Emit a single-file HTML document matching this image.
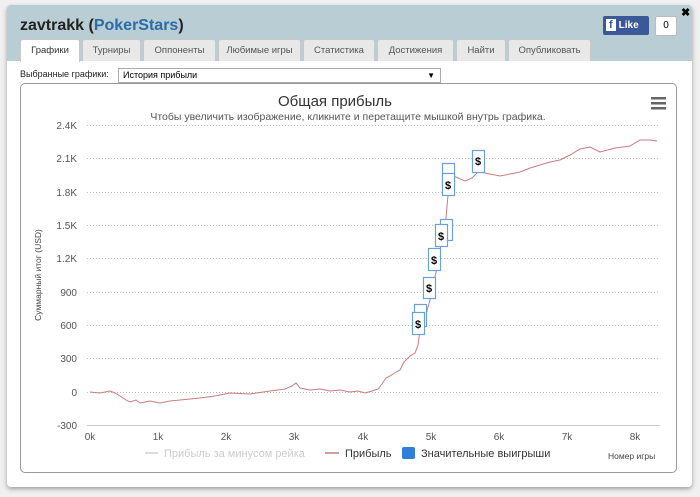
<!DOCTYPE html><html><head><meta charset="utf-8"><style>
body{margin:0;width:700px;height:497px;background:#f0f0f0;font-family:"Liberation Sans",sans-serif;overflow:hidden;position:relative}
.win{position:absolute;left:7px;top:5px;width:685px;height:482px;background:#fff;border-radius:4px;box-shadow:0 2px 5px rgba(0,0,0,.35);overflow:hidden}
.hd{position:absolute;left:0;top:0;width:685px;height:56px;background:#b9cdd5}
.ttl{position:absolute;left:13px;top:12px;font-size:16px;font-weight:bold;color:#222}
.ttl span{color:#2a6ba8}
.tab{position:absolute;top:34px;height:21px;background:#e8e8e8;border:1px solid #c8c8c8;border-bottom:none;border-radius:3px 3px 0 0;font-size:9.5px;color:#555;text-align:center;line-height:21px}
.tab.a{background:#fff;color:#333;height:22px}
.fb{position:absolute;left:596px;top:11px;width:46px;height:19px;background:#3b5998;border-radius:2px;color:#fff;font-size:10px;font-weight:bold;line-height:19px}
.cnt{position:absolute;left:648px;top:11px;width:20px;height:18px;border:1px solid #bbb;background:#fff;font-size:10px;text-align:center;line-height:18px;border-radius:2px}
.sel{position:absolute;left:111px;top:63px;width:317px;height:13px;border:1px solid #aaa;font-size:9px;line-height:13px;padding-left:4px}
.box{position:absolute;left:13px;top:78px;width:655px;height:388px;border:1px solid #999;border-radius:5px}
</style></head><body>
<div class="win">
<div class="hd"></div>
<div class="ttl">zavtrakk (<span>PokerStars</span>)</div>
<div class="fb"><span style="background:#fff;color:#3b5998;padding:0 3px;margin:0 3px 0 3px;font-size:11px">f</span>Like</div>
<div class="cnt">0</div>
<div style="position:absolute;left:674px;top:1px;font-size:11px;font-weight:bold">✖</div>
<div class="tab a" style="left:13px;width:58px">Графики</div>
<div class="tab" style="left:75px;width:57px">Турниры</div>
<div class="tab" style="left:136px;width:71px">Оппоненты</div>
<div class="tab" style="left:211px;width:81px">Любимые игры</div>
<div class="tab" style="left:296px;width:70px">Статистика</div>
<div class="tab" style="left:370px;width:75px">Достижения</div>
<div class="tab" style="left:449px;width:48px">Найти</div>
<div class="tab" style="left:501px;width:81px">Опубликовать</div>
<div style="position:absolute;left:13px;top:64px;font-size:9px;color:#222">Выбранные графики:</div>
<div class="sel">История прибыли<span style="position:absolute;right:5px;font-size:8px">▼</span></div>
<div class="box"></div>
</div>
<svg width="700" height="497" style="position:absolute;left:0;top:0" font-family="Liberation Sans,sans-serif">
<text x="335" y="106" font-size="15" fill="#333" text-anchor="middle">Общая прибыль</text>
<text x="348" y="120" font-size="10.5" fill="#555" text-anchor="middle">Чтобы увеличить изображение, кликните и перетащите мышкой внутрь графика.</text>
<g fill="#666"><rect x="651" y="97" width="15" height="2.5"/><rect x="651" y="102" width="15" height="2.5"/><rect x="651" y="107" width="15" height="2.5"/></g>
<g stroke="#bbb" stroke-dasharray="1,2" stroke-width="1">
<line x1="87" x2="660" y1="125.5" y2="125.5"/><line x1="87" x2="660" y1="158.5" y2="158.5"/><line x1="87" x2="660" y1="192.5" y2="192.5"/><line x1="87" x2="660" y1="225.5" y2="225.5"/><line x1="87" x2="660" y1="258.5" y2="258.5"/><line x1="87" x2="660" y1="292.5" y2="292.5"/><line x1="87" x2="660" y1="325.5" y2="325.5"/><line x1="87" x2="660" y1="358.5" y2="358.5"/><line x1="87" x2="660" y1="392.5" y2="392.5"/></g>
<line x1="87" x2="660" y1="425.5" y2="425.5" stroke="#ccc"/>
<g font-size="10" fill="#555" text-anchor="end">
<text x="77" y="129">2.4K</text><text x="77" y="162">2.1K</text><text x="77" y="196">1.8K</text><text x="77" y="229">1.5K</text><text x="77" y="262">1.2K</text><text x="77" y="296">900</text><text x="77" y="329">600</text><text x="77" y="362">300</text><text x="77" y="396">0</text><text x="77" y="429">-300</text></g>
<g font-size="10" fill="#555" text-anchor="middle">
<text x="90" y="440">0k</text><text x="158" y="440">1k</text><text x="226" y="440">2k</text><text x="294" y="440">3k</text><text x="363" y="440">4k</text><text x="431" y="440">5k</text><text x="499" y="440">6k</text><text x="567" y="440">7k</text><text x="635" y="440">8k</text></g>
<text transform="translate(41,275) rotate(-90)" font-size="8.5" fill="#444" text-anchor="middle">Суммарный итог (USD)</text>
<polyline fill="none" stroke="#c87c7c" stroke-width="1" points="90,392 100,393 110,391 115,393 120,396 126,400 130,402 136,400 140,403 150,401 160,403 170,401 180,400 190,399 200,398 215,396 230,393 250,394 270,391 285,389 292,386 296,383 300,388 310,390 320,389 330,391 340,390 350,392 358,391 365,393 372,391 378,389 382,384 386,378 390,376 396,372 400,370 404,362 410,356 415,353 418,345 420,330 425,318 430,300 433,285 437,268 440,250 443,235 446,218 448,195 449,180 452,175 458,178 465,181 472,178 478,172 485,173 500,176 510,174 520,172 530,168 540,165 550,162 560,160 570,155 580,149 590,147 600,152 615,148 630,146 640,140 650,140 657,141"/>
<g fill="#fff" stroke="#6a9fe0" stroke-width="1.2" font-size="11" font-weight="bold">
<rect x="414.5" y="304.5" width="12" height="22"/><rect x="412.5" y="312.5" width="12" height="22"/>
<rect x="423.5" y="277.5" width="12" height="21"/><rect x="428.5" y="248.5" width="12" height="22"/>
<rect x="440.5" y="219.5" width="12" height="21"/><rect x="435.5" y="224.5" width="12" height="22"/>
<rect x="442.5" y="163.5" width="12" height="22"/><rect x="442.5" y="173.5" width="12" height="22"/>
<rect x="472.5" y="150.5" width="12" height="22"/></g>
<g font-size="11" font-weight="bold" fill="#000" text-anchor="middle">
<text x="418" y="328">$</text><text x="429" y="292">$</text><text x="434" y="264">$</text><text x="441" y="240">$</text><text x="448" y="189">$</text><text x="478" y="165">$</text></g>
<line x1="145" x2="158" y1="453" y2="453" stroke="#ddd" stroke-width="2"/>
<text x="164" y="457" font-size="11" fill="#ccc">Прибыль за минусом рейка</text>
<line x1="325" x2="339" y1="453" y2="453" stroke="#c87c7c" stroke-width="1.5"/>
<text x="345" y="457" font-size="11" fill="#333">Прибыль</text>
<rect x="402" y="447" width="13" height="12" rx="2" fill="#2f7ed8"/>
<text x="421" y="457" font-size="11" fill="#333">Значительные выигрыши</text>
<text x="608" y="459" font-size="8.5" fill="#444">Номер игры</text>
</svg>
</body></html>
